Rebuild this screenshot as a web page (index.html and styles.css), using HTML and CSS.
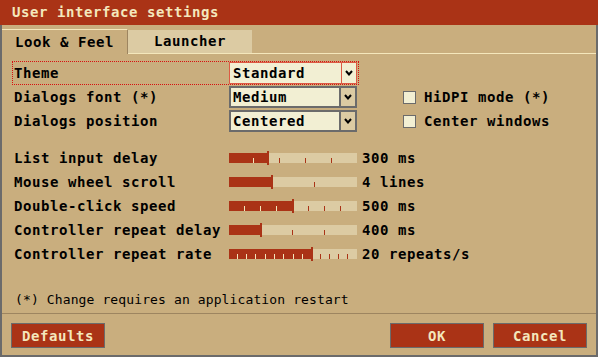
FILE: index.html
```html
<!DOCTYPE html>
<html>
    <head>
        <meta charset='utf-8'/>
        <title>User interface settings</title>
        <link rel="stylesheet" href="styles.css">
    </head>
    <body>
        <div class='win'>
            <div class='title'>User interface settings</div>
            <div class='main'>
                <div class='tabs'>
                    <div class='tab on'>Look &amp; Feel</div>
                    <div class='tab'>Launcher</div>
                    <div class='tab_rest'></div>
                </div>
                <div class='content'>
                    <div class='top'>
                        <div class='opts'>
                            <div class='row focus'>
                                <div class='lbl'>Theme</div>
                                <div class='combo on'><span class='val'>Standard</span><span class='arrow'><svg width='8' height='6' viewBox='0 0 8 6'><polyline points='1,1 4,4.5 7,1' fill='none' stroke='#000' stroke-width='2'/></svg></span></div>
                            </div>
                            <div class='row'>
                                <div class='lbl'>Dialogs font (*)</div>
                                <div class='combo'><span class='val'>Medium</span><span class='arrow'><svg width='8' height='6' viewBox='0 0 8 6'><polyline points='1,1 4,4.5 7,1' fill='none' stroke='#000' stroke-width='2'/></svg></span></div>
                            </div>
                            <div class='row'>
                                <div class='lbl'>Dialogs position</div>
                                <div class='combo'><span class='val'>Centered</span><span class='arrow'><svg width='8' height='6' viewBox='0 0 8 6'><polyline points='1,1 4,4.5 7,1' fill='none' stroke='#000' stroke-width='2'/></svg></span></div>
                            </div>
                        </div>
                        <div class='checks'>
                            <div class='chk'></div>
                            <div class='chk'><span class='box'></span>HiDPI mode (*)</div>
                            <div class='chk'><span class='box'></span>Center windows</div>
                        </div>
                    </div>
                    <div class='sliders'>
                        <div class='srow'>
                            <div class='slbl'>List input delay</div>
                            <div class='track'>
                                <div class='fill' style='width:38px'></div>
                                <i class='tk lt' style='left:24px'></i><i class='tk' style='left:50px'></i><i class='tk' style='left:76px'></i><i class='tk' style='left:102px'></i>
                                <div class='thumb' style='left:38px'></div>
                            </div>
                            <div class='sval'>300 ms</div>
                        </div>
                        <div class='srow'>
                            <div class='slbl'>Mouse wheel scroll</div>
                            <div class='track'>
                                <div class='fill' style='width:42px'></div>
                                <i class='tk' style='left:85px'></i>
                                <div class='thumb' style='left:42px'></div>
                            </div>
                            <div class='sval'>4 lines</div>
                        </div>
                        <div class='srow'>
                            <div class='slbl'>Double-click speed</div>
                            <div class='track'>
                                <div class='fill' style='width:63px'></div>
                                <i class='tk lt' style='left:15px'></i><i class='tk lt' style='left:31px'></i><i class='tk lt' style='left:47px'></i><i class='tk' style='left:79px'></i><i class='tk' style='left:95px'></i><i class='tk' style='left:111px'></i>
                                <div class='thumb' style='left:63px'></div>
                            </div>
                            <div class='sval'>500 ms</div>
                        </div>
                        <div class='srow'>
                            <div class='slbl'>Controller repeat delay</div>
                            <div class='track'>
                                <div class='fill' style='width:31px'></div>
                                <i class='tk' style='left:63px'></i><i class='tk' style='left:95px'></i>
                                <div class='thumb' style='left:31px'></div>
                            </div>
                            <div class='sval'>400 ms</div>
                        </div>
                        <div class='srow'>
                            <div class='slbl'>Controller repeat rate</div>
                            <div class='track'>
                                <div class='fill' style='width:82px'></div>
                                <i class='tk lt' style='left:8px'></i><i class='tk lt' style='left:17px'></i><i class='tk lt' style='left:26px'></i><i class='tk lt' style='left:36px'></i><i class='tk lt' style='left:45px'></i><i class='tk lt' style='left:54px'></i><i class='tk lt' style='left:64px'></i><i class='tk lt' style='left:73px'></i><i class='tk' style='left:91px'></i><i class='tk' style='left:100px'></i><i class='tk' style='left:109px'></i><i class='tk' style='left:118px'></i>
                                <div class='thumb' style='left:82px'></div>
                            </div>
                            <div class='sval'>20 repeats/s</div>
                        </div>
                    </div>
                    <div class='note'>(*) Change requires an application restart</div>
                </div>
                <div class='sep'></div>
                <div class='btns'>
                    <button class='btn'>Defaults</button>
                    <div class='spacer'></div>
                    <button class='btn'>OK</button>
                    <button class='btn'>Cancel</button>
                </div>
            </div>
        </div>
    </body>
</html>
```
FILE: styles.css
```css
body{margin:0;padding:0;background-color:#6b6b6b;font-family:'DejaVu Sans Mono','Liberation Mono',monospace;font-size:14px;font-weight:bold;letter-spacing:0.57px;color:#000;}
.win{width:598px;height:357px;display:flex;flex-direction:column;background-color:#c9ae7e;}
.title{height:25px;line-height:25px;padding-left:12px;background-color:#aa3316;color:#f4e7bc;}
.main{flex:1;display:flex;flex-direction:column;border:2px solid #6b6b6b;border-top:0;}
.tabs{display:flex;align-items:flex-end;height:25px;margin-top:4px;}
.tab{width:124px;height:23px;line-height:23px;text-align:center;background-color:#dccba3;border-bottom:1px solid #f4e7bc;}
.tab.on{width:126px;box-sizing:border-box;text-align:left;padding-left:13px;background-color:transparent;border-top:1px solid #f4e7bc;border-right:1px solid #9d8560;border-bottom:0;height:25px;line-height:24px;}
.tab_rest{flex:1;border-bottom:1px solid #f4e7bc;}
.content{padding:7px 0 0 10px;}
.top{display:flex;gap:44px;}
.row{width:347px;height:24px;box-sizing:border-box;border:1px dotted transparent;padding:0 1px;display:flex;align-items:center;}
.row.focus{border-color:#d81010;}
.lbl{width:215px;}
.combo{width:128px;height:22px;box-sizing:border-box;border:2px solid #6b6b6b;background-color:#f2efd3;display:flex;}
.combo.on{border:1px solid #dc5a44;padding:1px;}
.val{flex:1;padding-left:2px;line-height:18px;}
.arrow{width:14px;display:flex;align-items:center;justify-content:center;border-left:2px solid #6b6b6b;background-color:#dccba3;}
.combo.on .arrow{border:1px solid #dc5a44;margin:-2px;width:14px;background-color:#f2efd3;}
.checks{display:flex;flex-direction:column;}
.chk{height:24px;display:flex;align-items:center;}
.box{width:13px;height:13px;box-sizing:border-box;border:1px solid #6b6b6b;background-color:#f2efd3;margin-right:8px;}
.sliders{margin-top:13px;padding-left:2px;}
.srow{height:24px;display:flex;align-items:center;}
.slbl{width:215px;}
.track{position:relative;width:128px;height:10px;background-color:#dccba3;}
.fill{height:10px;background-color:#aa3316;}
.thumb{position:absolute;top:-2px;width:2px;height:14px;background-color:#aa3316;}
.tk{position:absolute;top:5px;width:1px;height:5px;background-color:#aa3316;}
.tk.lt{background-color:#f4e7bc;}
.sval{margin-left:5px;}
.note{margin-top:26px;padding-left:3px;font-size:13px;font-weight:normal;letter-spacing:0.12px;line-height:16px;}
.sep{height:1px;margin-top:5px;background-color:#9d8560;}
.btns{display:flex;gap:9px;padding:9px 9px 0 9px;}
.spacer{flex:1;}
.btn{width:94px;height:25px;padding:0;border:1px solid #6b6b6b;background-color:#aa3316;color:#f4e7bc;font-family:'DejaVu Sans Mono','Liberation Mono',monospace;font-size:14px;font-weight:bold;letter-spacing:0.57px;}
```
